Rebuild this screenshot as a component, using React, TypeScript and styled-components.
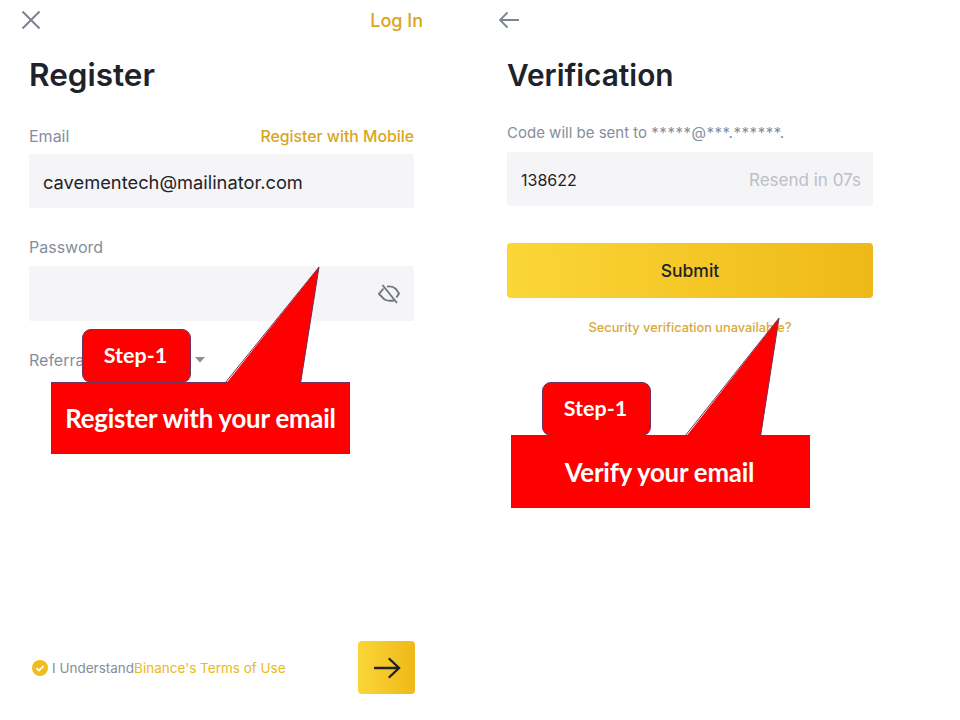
import React from 'react';
import styled, { createGlobalStyle } from 'styled-components';

const GlobalStyle = createGlobalStyle`
  html, body {
    margin: 0;
    padding: 0;
    background: #fff;
  }
  body {
    font-family: "Inter", "Noto Sans", sans-serif;
  }
`;

const Screen = styled.div`
  display: grid;
  grid-template-columns: 480px 480px;
  width: 960px;
  height: 720px;
  position: relative;
  overflow: hidden;
  background: #fff;
`;

const Panel = styled.section<{ $left: number; $width: number }>`
  display: flex;
  flex-direction: column;
  height: 720px;
  box-sizing: border-box;
  padding-left: ${props => props.$left}px;
  width: ${props => props.$left + props.$width}px;
`;

const TopBar = styled.div<{ $indent: number }>`
  display: flex;
  justify-content: space-between;
  align-items: center;
  height: 40px;
  margin-left: ${props => props.$indent}px;
  margin-right: -9px;
`;

const LogIn = styled.span`
  font-size: 18px;
  font-weight: 500;
  color: #d9a520;
`;

const Title = styled.h1<{ $size: number }>`
  margin: 15px 0 0;
  font-size: ${props => props.$size}px;
  line-height: 40px;
  font-weight: 600;
  color: #1e2329;
`;

const LabelRow = styled.div<{ $top: number }>`
  display: flex;
  justify-content: space-between;
  align-items: center;
  height: 20px;
  margin-top: ${props => props.$top}px;
`;

const Label = styled.span<{ $size?: number }>`
  font-size: ${props => props.$size ?? 16}px;
  color: #848e9c;
`;

const Masked = styled.span`
  letter-spacing: 0.55px;
`;

const SmallLink = styled.span`
  font-size: 15.8px;
  font-weight: 500;
  color: #d9a520;
`;

const Field = styled.div<{ $top: number; $height: number; $pad: number; $size: number; $right?: number }>`
  display: flex;
  justify-content: space-between;
  align-items: center;
  box-sizing: border-box;
  margin-top: ${props => props.$top}px;
  height: ${props => props.$height}px;
  padding: 0 ${props => props.$right ?? 12}px 0 ${props => props.$pad}px;
  background: #f5f4f6;
  border-radius: 2px;
  color: #1e2329;
  font-size: ${props => props.$size}px;
`;

const FieldText = styled.span`
  padding-top: 2px;
`;

const Hint = styled.span`
  padding-top: 2px;
  color: #bcc0c7;
  font-size: 17px;
`;

const Submit = styled.div`
  display: flex;
  justify-content: center;
  align-items: center;
  margin-top: 37px;
  height: 55px;
  border-radius: 4px;
  background: linear-gradient(90deg, #fbd637, #eeb918);
  color: #1e2329;
  font-size: 17.5px;
  font-weight: 500;
`;

const Centered = styled.div`
  margin-top: 21px;
  text-align: center;
  font-size: 12.8px;
  line-height: 18px;
  font-weight: 500;
  color: #d9a93a;
`;

const Footer = styled.div`
  display: flex;
  align-items: center;
  justify-content: space-between;
  margin-top: auto;
  margin-bottom: 26px;
  margin-right: -1px;
  padding-left: 3px;
`;

const Terms = styled.div`
  display: flex;
  align-items: center;
  gap: 4px;
  font-size: 13.5px;
  color: #848e9c;
`;

const TermsLink = styled.span`
  color: #e8b923;
`;

const ArrowButton = styled.div`
  display: flex;
  justify-content: center;
  align-items: center;
  width: 57px;
  height: 53px;
  border-radius: 4px;
  background: linear-gradient(90deg, #fbd637, #eeb918);
`;

const Callout = styled.div<{ $x: number; $y: number; $h: number; $shift?: number }>`
  position: absolute;
  left: ${props => props.$x}px;
  top: ${props => props.$y}px;
  width: 299px;
  height: ${props => props.$h}px;
  box-sizing: border-box;
  display: flex;
  align-items: center;
  justify-content: center;
  padding-right: ${props => props.$shift ?? 0}px;
  background: #fe0000;
  border: 1px solid #70325f;
  color: #fff;
  font-family: "Lato", "Open Sans", sans-serif;
  font-size: 25.8px;
  font-weight: 700;
  letter-spacing: -0.2px;
`;

const Tail = styled.svg`
  position: absolute;
  left: -1px;
  bottom: 100%;
  margin-bottom: -2px;
  overflow: visible;
`;

const StepBadge = styled.div<{ $x: number; $y: number }>`
  position: absolute;
  left: ${props => props.$x}px;
  top: ${props => props.$y}px;
  width: 109px;
  height: 54px;
  box-sizing: border-box;
  display: flex;
  align-items: center;
  justify-content: center;
  padding: 0 2px 2px 0;
  background: #fe0000;
  border: 1px solid #70325f;
  border-radius: 9px;
  color: #fff;
  font-family: "Lato", "Open Sans", sans-serif;
  font-size: 21.5px;
  font-weight: 700;
`;

const CaretIcon = styled.svg`
  position: absolute;
  left: 195px;
  top: 357px;
`;

const CloseIcon = () => (
  <svg width="20" height="20" viewBox="0 0 20 20" fill="none" stroke="#7c8490" strokeWidth="2">
    <path d="M1.5 1.5 18.5 18.5M18.5 1.5 1.5 18.5" />
  </svg>
);

const BackIcon = () => (
  <svg width="22" height="18" viewBox="0 0 22 18" fill="none" stroke="#7c8490" strokeWidth="1.8">
    <path d="M21 9H2M9.5 1.5 2 9l7.5 7.5" />
  </svg>
);

const EyeOffIcon = () => (
  <svg width="24" height="22" viewBox="0 0 24 22" fill="none" stroke="#6f7680" strokeWidth="1.9">
    <path d="M6.5 5.5 2 11l5.5 5.5c3 1.5 6.5 1.5 9.5 1M10 3.6c3.5-.6 6.6.2 9 2.4l3 4.5-2.6 4" />
    <path d="M5.5 2 20 20" />
  </svg>
);

const CheckBadge = () => (
  <svg width="16" height="16" viewBox="0 0 16 16">
    <circle cx="8" cy="8" r="8" fill="#efbd1f" />
    <path d="M4.4 8.2 7 10.6l4.6-4.8" fill="none" stroke="#fff" strokeWidth="1.7" />
  </svg>
);

const ArrowIcon = () => (
  <svg width="28" height="22" viewBox="0 0 28 22" fill="none" stroke="#1e2329" strokeWidth="2.4" strokeLinecap="round">
    <path d="M2 11h24M16.5 2 26 11l-9.5 9" />
  </svg>
);

const CalloutTail = ({ baseLeft, baseRight, tipX, height }: { baseLeft: number; baseRight: number; tipX: number; height: number }) => (
  <Tail width="299" height={height} viewBox={`0 0 299 ${height}`}>
    <polygon points={`${baseLeft},${height} ${tipX},0 ${baseRight},${height}`} fill="#fe0000" />
    <polyline points={`${baseLeft},${height - 2} ${tipX},0 ${baseRight},${height - 2}`} fill="none" stroke="#70325f" strokeWidth="1" />
  </Tail>
);

export default function App() {
  return (
    <Screen>
      <GlobalStyle />
      <Panel $left={29} $width={385}>
        <TopBar $indent={-8}>
          <CloseIcon />
          <LogIn>Log In</LogIn>
        </TopBar>
        <Title $size={31.5}>Register</Title>
        <LabelRow $top={31}>
          <Label>Email</Label>
          <SmallLink>Register with Mobile</SmallLink>
        </LabelRow>
        <Field $top={8} $height={54} $pad={14} $size={18.3}>
          <FieldText>cavementech@mailinator.com</FieldText>
        </Field>
        <LabelRow $top={29}>
          <Label>Password</Label>
        </LabelRow>
        <Field $top={9} $height={55} $pad={14} $size={17} $right={13}>
          <span />
          <EyeOffIcon />
        </Field>
        <LabelRow $top={29}>
          <Label>Referral ID (Optional)</Label>
        </LabelRow>
        <Footer>
          <Terms>
            <CheckBadge />
            <span>I Understand<TermsLink>Binance's Terms of Use</TermsLink></span>
          </Terms>
          <ArrowButton>
            <ArrowIcon />
          </ArrowButton>
        </Footer>
      </Panel>
      <Panel $left={27} $width={366}>
        <TopBar $indent={-9}>
          <BackIcon />
        </TopBar>
        <Title $size={29.8}>Verification</Title>
        <LabelRow $top={27}>
          <Label $size={15}>Code will be sent to <Masked>*****@***.******.</Masked></Label>
        </LabelRow>
        <Field $top={10} $height={54} $pad={14} $size={16}>
          <FieldText>138622</FieldText>
          <Hint>Resend in 07s</Hint>
        </Field>
        <Submit>Submit</Submit>
        <Centered>Security verification unavailable?</Centered>
      </Panel>

      <CaretIcon width="10" height="6" viewBox="0 0 10 6">
        <path d="M0 0h10L5 5.5z" fill="#848e9c" />
      </CaretIcon>
      <StepBadge $x={82} $y={329}>Step-1</StepBadge>
      <Callout $x={51} $y={382} $h={72}>
        <CalloutTail baseLeft={174} baseRight={249.5} tipX={268} height={118} />
        Register with your email
      </Callout>
      <StepBadge $x={542} $y={382}>Step-1</StepBadge>
      <Callout $x={511} $y={435} $h={73} $shift={2}>
        <CalloutTail baseLeft={174} baseRight={249.5} tipX={268} height={120} />
        Verify your email
      </Callout>
    </Screen>
  );
}
